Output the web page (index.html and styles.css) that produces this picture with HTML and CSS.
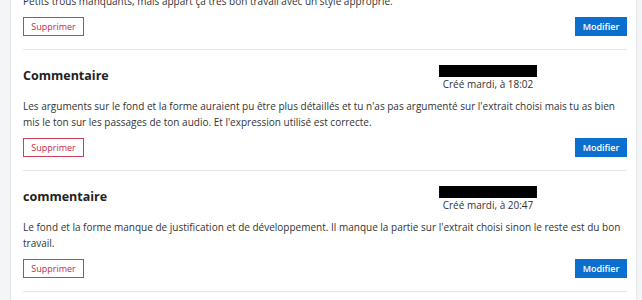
FILE: index.html
```html
<!doctype html>
<html>

<head>
    <link rel="stylesheet" href="styles.css">
</head>

<body>
    <div class="page">
        <aside class="side-left"></aside>
        <main class="comments">
            <div class="comment first">
                <p class="comment-text">Petits trous manquants, mais appart ça très bon travail avec un style approprié.</p>
                <div class="actions">
                    <button class="btn-delete">Supprimer</button>
                    <button class="btn-edit">Modifier</button>
                </div>
            </div>

            <div class="comment">
                <div class="comment-head">
                    <h3 class="comment-title">Commentaire</h3>
                    <div class="meta">
                        <div class="author-hidden"></div>
                        <div class="date">Créé mardi, à 18:02</div>
                    </div>
                </div>
                <p class="comment-text">Les arguments sur le fond et la forme auraient pu être plus détaillés et tu n'as pas argumenté sur l'extrait choisi mais tu as bien mis le ton sur les passages de ton audio. Et l'expression utilisé est correcte.</p>
                <div class="actions">
                    <button class="btn-delete">Supprimer</button>
                    <button class="btn-edit">Modifier</button>
                </div>
            </div>

            <div class="comment">
                <div class="comment-head">
                    <h3 class="comment-title">commentaire</h3>
                    <div class="meta">
                        <div class="author-hidden"></div>
                        <div class="date">Créé mardi, à 20:47</div>
                    </div>
                </div>
                <p class="comment-text">Le fond et la forme manque de justification et de développement. Il manque la partie sur l'extrait choisi sinon le reste est du bon travail.</p>
                <div class="actions">
                    <button class="btn-delete">Supprimer</button>
                    <button class="btn-edit">Modifier</button>
                </div>
            </div>
        </main>
        <aside class="side-right"></aside>
    </div>
</body>

</html>
```

FILE: styles.css
```css
body {
    margin: 0;
    background: #fff;
    font-family: "Open Sans", "Liberation Sans", sans-serif;
    color: #333;
    overflow: hidden;
}

.page {
    display: flex;
    height: 300px;
}

.side-left {
    width: 10px;
    background: #f4f5f6;
    border-right: 1px solid #e3e4e6;
}

.side-right {
    width: 5px;
    background: #f4f5f6;
    border-left: 1px solid #e3e4e6;
}

.comments {
    flex: 1;
    padding: 0 9px 0 12px;
}

.comment {
    padding: 15px 0 13px;
    border-bottom: 1px solid #e6e6e6;
}

.comment.first {
    margin-top: -22px;
}

.comment-head {
    display: flex;
    align-items: center;
}

.comment-title {
    flex: 1;
    margin: 0 0 4px;
    font-size: 12.5px;
    font-weight: 700;
    color: #222;
}

.meta {
    display: flex;
    flex-direction: column;
    align-items: center;
    margin-right: 90px;
}

.author-hidden {
    width: 98px;
    height: 12px;
    background: #000;
}

.date {
    margin-top: 1px;
    font-size: 10px;
    line-height: 13px;
}

.comment-text {
    margin: 7px 0 0;
    font-size: 10px;
    line-height: 16.5px;
}

.first .comment-text {
    margin-top: 0;
}

.actions {
    display: flex;
    justify-content: space-between;
    margin-top: 7px;
}

.actions button {
    height: 19px;
    padding: 0;
    font-family: inherit;
    font-size: 9px;
    border-radius: 0;
    cursor: pointer;
}

.btn-delete {
    width: 61px;
    background: #fff;
    color: #c42b43;
    border: 1px solid #cc4057;
}

.btn-edit {
    width: 52px;
    background: #0b6fd0;
    color: #fff;
    border: 1px solid #0b6fd0;
    font-weight: 600;
}
```
